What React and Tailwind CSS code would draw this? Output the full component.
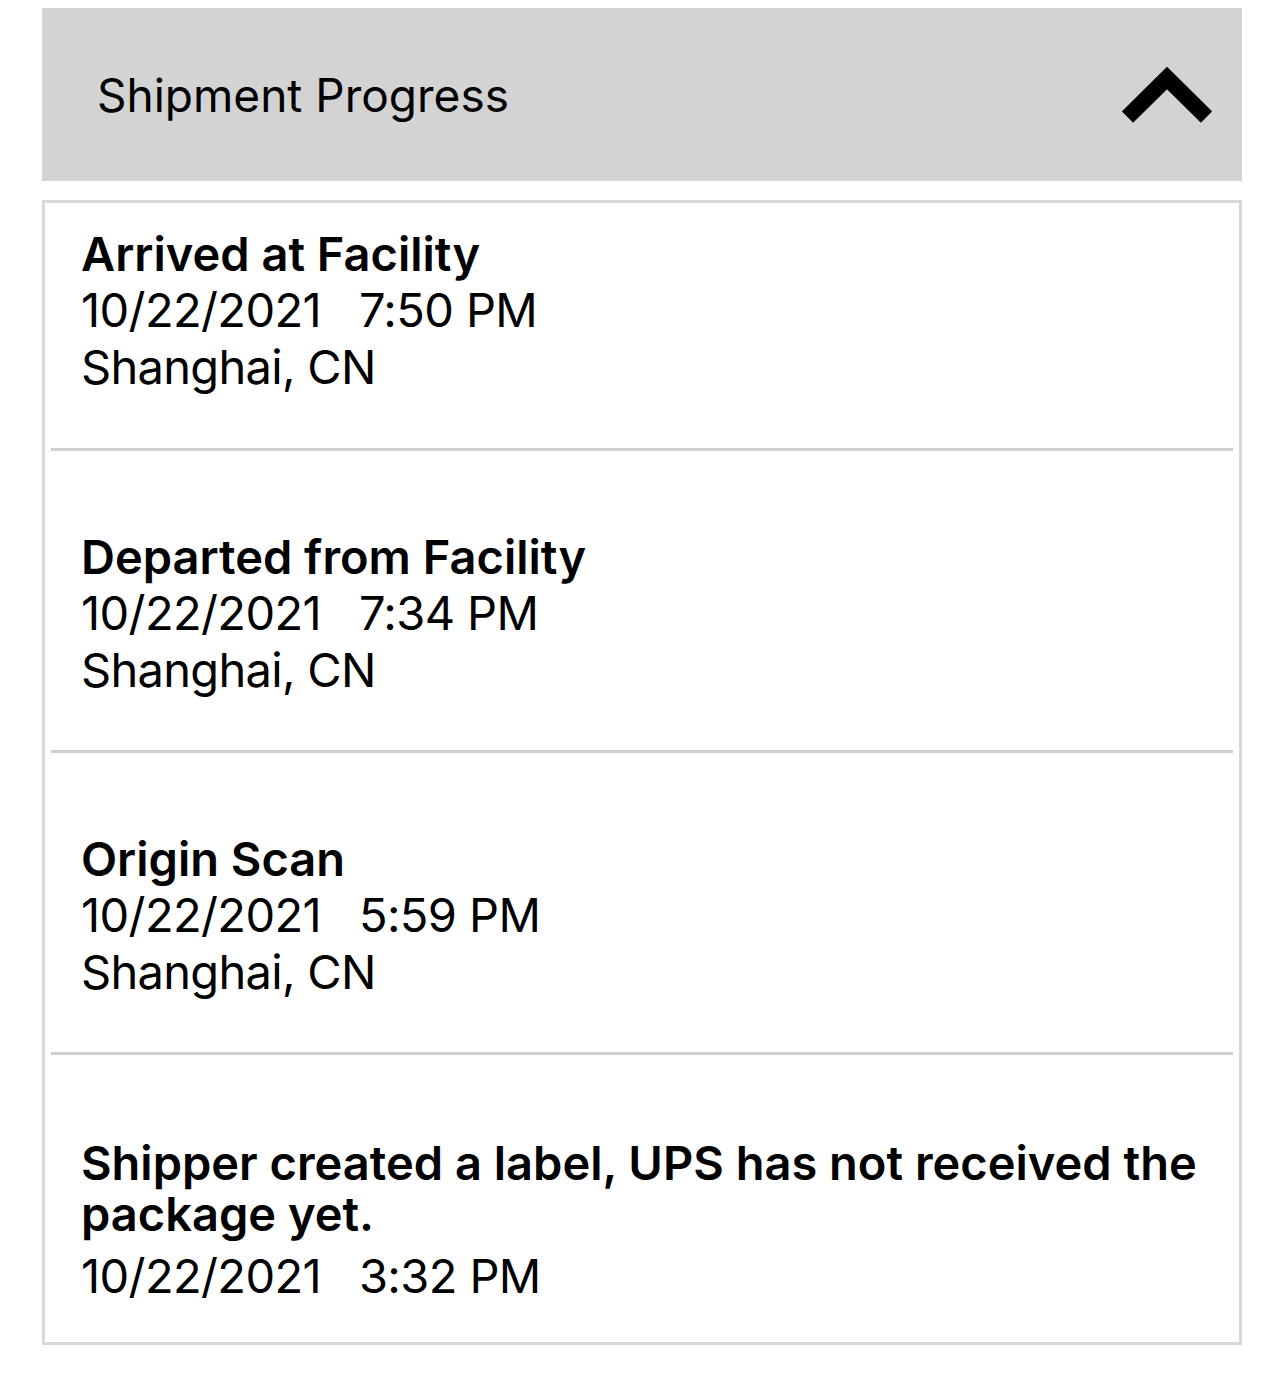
import React from "react";

const events = [
  { title: "Arrived at Facility", date: "10/22/2021", time: "7:50 PM", loc: "Shanghai, CN", h: "h-[245px]", pt: "pt-[25px]", dm: "mt-[2px]" },
  { title: "Departed from Facility", date: "10/22/2021", time: "7:34 PM", loc: "Shanghai, CN", h: "h-[299px]", pt: "pt-[80px]", dm: "mt-[2px]" },
  { title: "Origin Scan", date: "10/22/2021", time: "5:59 PM", loc: "Shanghai, CN", h: "h-[299px]", pt: "pt-[80px]", dm: "mt-[2px]" },
  { title: "Shipper created a label, UPS has not received the package yet.", date: "10/22/2021", time: "3:32 PM", loc: null, h: "h-[287px]", pt: "pt-[82px]", dm: "mt-[8px]" },
];

function Chevron() {
  return (
    <svg width="90" height="57" viewBox="0 0 90 57" className="block">
      <polyline
        points="5.5,51 45,12 84.5,51"
        fill="none"
        stroke="#000"
        strokeWidth="16"
        strokeLinejoin="miter"
        strokeLinecap="butt"
      />
    </svg>
  );
}

export default function App() {
  return (
    <div className="min-h-[1393px] bg-white pt-[8px] px-[42px] font-['Inter',sans-serif] text-black">
      <div className="h-[173px] bg-[#d3d3d3] flex items-center justify-between pl-[55px] pr-[30px]">
        <span className="text-[46px] leading-none">Shipment Progress</span>
        <Chevron />
      </div>
      <div className="mt-[19px] border-[3px] border-[#d8d8d8] bg-white">
        {events.map((e, i) => (
          <React.Fragment key={i}>
            {i > 0 && <div className="h-[3px] bg-[#d2cdc8] mx-[6px]" />}
            <div className={`${e.h} ${e.pt} pl-[36px] pr-[30px]`}>
              <div className="text-[47px] leading-[51px] font-semibold">{e.title}</div>
              <div className={`${e.dm} text-[47px] leading-[57px] whitespace-pre tracking-[-0.6px]`}>{`${e.date}   ${e.time}`}</div>
              {e.loc && <div className="text-[47px] leading-[57px] tracking-[-0.7px]">{e.loc}</div>}
            </div>
          </React.Fragment>
        ))}
      </div>
    </div>
  );
}
